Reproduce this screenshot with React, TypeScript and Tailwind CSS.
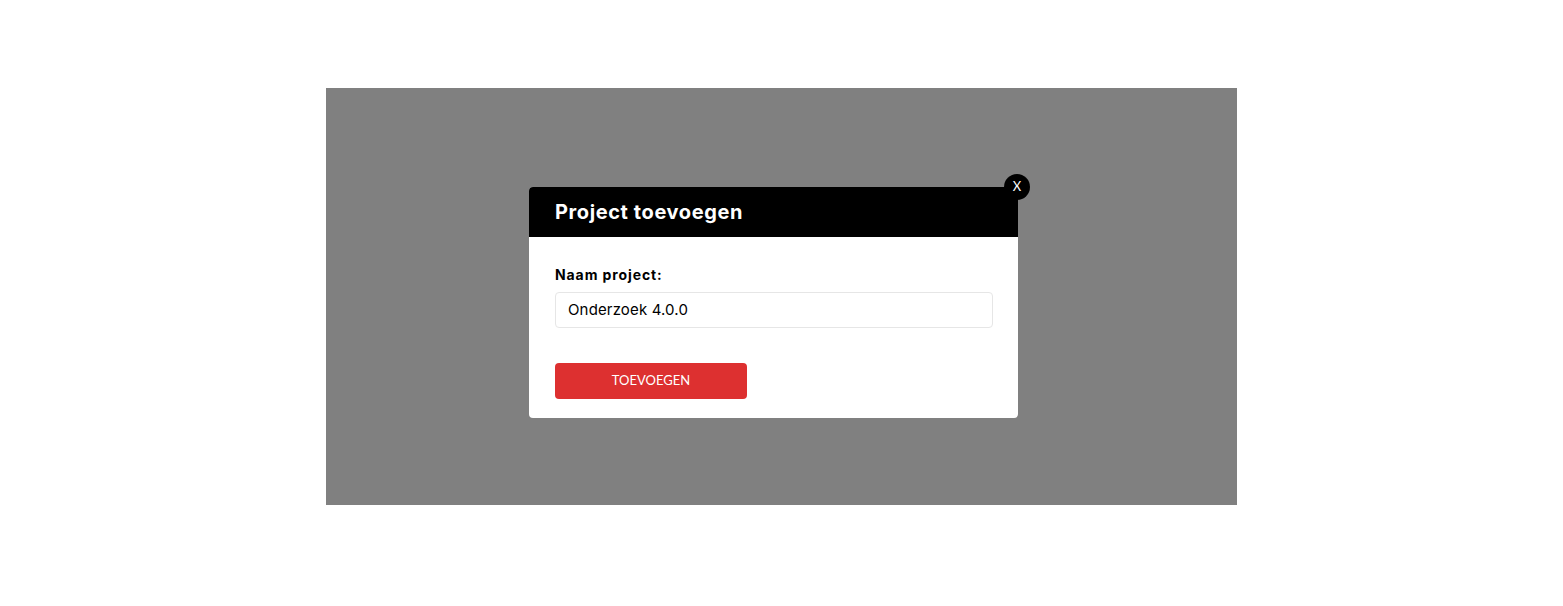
export default function App() {
  return (
    <div className="w-[1563px] h-[606px] bg-white pt-[88px] pl-[326px] font-['Inter','Noto_Sans',sans-serif]">
      <div className="w-[911px] h-[417px] bg-[#808080] flex pl-[203px] pt-[99px]">
        {/* Modal */}
        <div className="relative w-[489px] h-[231px] bg-white rounded-[4px] flex flex-col">
          <div className="h-[50px] bg-black rounded-t-[4px] flex items-center px-[26px]">
            <h2 className="text-white text-[20px] font-bold tracking-[0.6px]">Project toevoegen</h2>
          </div>
          <div className="px-[26px] pt-[28px] flex flex-col">
            <label className="text-[14px] font-bold text-black leading-[20px] tracking-[0.9px]">Naam project:</label>
            <div className="mt-[7px] h-[36px] w-[438px] border border-[#e6e6e6] rounded-[4px] flex items-center px-[12px]">
              <span className="text-[15px] text-black tracking-[0.15px]">Onderzoek 4.0.0</span>
            </div>
            <button className="mt-[35px] h-[36px] w-[192px] bg-[#dd3030] rounded-[4px] text-white text-[13px] font-['Lato',sans-serif]">
              TOEVOEGEN
            </button>
          </div>
          <div className="absolute -top-[13px] -right-[12px] w-[26px] h-[26px] rounded-full bg-black flex items-center justify-center text-white text-[13px] font-['Lato',sans-serif]">
            X
          </div>
        </div>
      </div>
    </div>
  );
}
